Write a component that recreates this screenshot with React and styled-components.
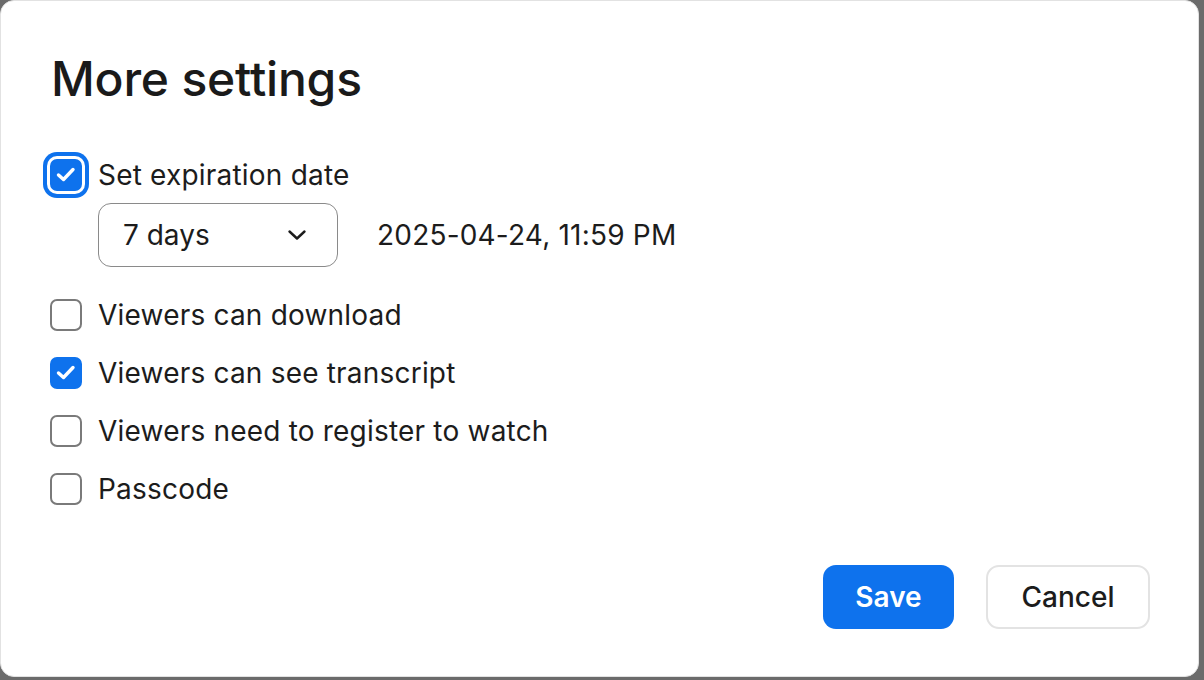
import React, { useState } from "react";
import styled, { createGlobalStyle, css } from "styled-components";

const Global = createGlobalStyle`
  html, body {
    margin: 0;
    padding: 0;
    background: #6b6b6b;
  }
  body {
    font-family: Inter, "Noto Sans", "Liberation Sans", sans-serif;
    color: #1c1c1c;
    -webkit-font-smoothing: antialiased;
  }
  * { box-sizing: border-box; }
`;

const Dialog = styled.div`
  width: 1199px;
  height: 677px;
  background: #ffffff;
  border: 1px solid #e2e2e2;
  border-radius: 14px;
  padding: 54px 48px 47px 49px;
  display: flex;
  flex-direction: column;
`;

const Title = styled.h1`
  margin: 0 0 0 1px;
  font-size: 48px;
  line-height: 48px;
  font-weight: 500;
  letter-spacing: -0.2px;
  color: #1a1a1a;
`;

const Options = styled.div`
  display: flex;
  flex-direction: column;
  margin-top: 56px;
`;

const Row = styled.label`
  display: flex;
  align-items: center;
  gap: 16px;
  height: 32px;
  margin-top: ${(p) => p.$gap || 0}px;
  cursor: pointer;
`;

const Box = styled.span`
  width: 32px;
  height: 32px;
  flex: none;
  border-radius: 7px;
  display: flex;
  align-items: center;
  justify-content: center;
  border: 2px solid #7a7a7a;
  background: #fff;
  ${(p) =>
    p.$checked &&
    css`
      border-color: #0e72ed;
      background: #0e72ed;
    `}
  ${(p) =>
    p.$focused &&
    css`
      box-shadow: 0 0 0 3px #ffffff, 0 0 0 7px #0e72ed;
    `}
`;

const Label = styled.span`
  font-size: 28px;
  line-height: 32px;
  font-weight: 400;
  color: #1c1c1c;
  letter-spacing: 0.2px;
`;

const SubRow = styled.div`
  display: flex;
  align-items: center;
  gap: 39px;
  margin: 12px 0 0 48px;
`;

const Select = styled.button`
  width: 240px;
  height: 64px;
  border: 1.5px solid #8a8a8a;
  border-radius: 13px;
  background: #fff;
  display: flex;
  align-items: center;
  justify-content: space-between;
  padding: 0 30px 0 24px;
  font-family: inherit;
  font-size: 28px;
  color: #1c1c1c;
  cursor: pointer;
`;

const DateText = styled.span`
  font-size: 28px;
  line-height: 32px;
  color: #1c1c1c;
  letter-spacing: 0.2px;
`;

const Footer = styled.div`
  margin-top: auto;
  display: flex;
  justify-content: flex-end;
  gap: 32px;
`;

const Button = styled.button`
  height: 64px;
  padding: 0;
  width: ${(p) => p.$w}px;
  border-radius: 13px;
  font-family: inherit;
  font-size: 28px;
  cursor: pointer;
  ${(p) =>
    p.$primary
      ? css`
          background: #0e72ed;
          border: none;
          color: #fff;
          font-weight: 600;
        `
      : css`
          background: #fff;
          border: 2px solid #e3e3e3;
          color: #1c1c1c;
          font-weight: 500;
        `}
`;

const Check = () => (
  <svg width="28" height="28" viewBox="0 0 28 28" fill="none">
    <path
      d="M6.5 14 L11.5 18.5 L21 8.5"
      stroke="#fff"
      strokeWidth="3.4"
      strokeLinecap="round"
      strokeLinejoin="round"
    />
  </svg>
);

const Chevron = () => (
  <svg width="20" height="12" viewBox="0 0 20 12" fill="none">
    <path
      d="M2.5 2.5 L10 9.5 L17.5 2.5"
      stroke="#1c1c1c"
      strokeWidth="2.4"
      strokeLinecap="round"
      strokeLinejoin="round"
    />
  </svg>
);

const Checkbox = ({ checked, focused, onToggle, children, gap }) => (
  <Row $gap={gap} onClick={onToggle}>
    <Box $checked={checked} $focused={focused}>
      {checked && <Check />}
    </Box>
    <Label>{children}</Label>
  </Row>
);

export default function App() {
  const [opts, setOpts] = useState({
    expire: true,
    download: false,
    transcript: true,
    register: false,
    passcode: false,
  });
  const toggle = (k) => () => setOpts((o) => ({ ...o, [k]: !o[k] }));

  return (
    <>
      <Global />
      <Dialog>
        <Title>More settings</Title>
        <Options>
          <Checkbox checked={opts.expire} focused onToggle={toggle("expire")}>
            Set expiration date
          </Checkbox>
          <SubRow>
            <Select>
              <span>7 days</span>
              <Chevron />
            </Select>
            <DateText>2025-04-24, 11:59 PM</DateText>
          </SubRow>
          <Checkbox gap={32} checked={opts.download} onToggle={toggle("download")}>
            Viewers can download
          </Checkbox>
          <Checkbox gap={26} checked={opts.transcript} onToggle={toggle("transcript")}>
            Viewers can see transcript
          </Checkbox>
          <Checkbox gap={26} checked={opts.register} onToggle={toggle("register")}>
            Viewers need to register to watch
          </Checkbox>
          <Checkbox gap={26} checked={opts.passcode} onToggle={toggle("passcode")}>
            Passcode
          </Checkbox>
        </Options>
        <Footer>
          <Button $primary $w={131}>Save</Button>
          <Button $w={164}>Cancel</Button>
        </Footer>
      </Dialog>
    </>
  );
}
